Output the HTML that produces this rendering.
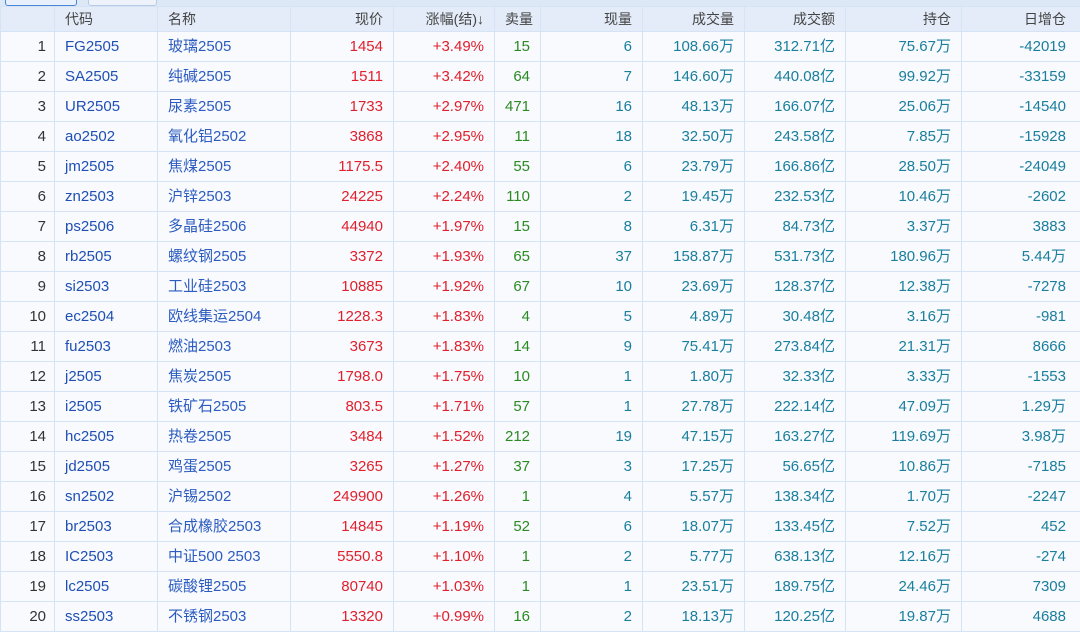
<!DOCTYPE html>
<html><head><meta charset="utf-8"><style>
body{margin:0;width:1080px;height:631px;overflow:hidden;background:#eef3fb;font-family:"Liberation Sans","Noto Sans CJK SC",sans-serif;}
.top{position:absolute;left:0;top:0;width:1080px;height:6px;background:#dde8f6;}
.b1{position:absolute;left:5px;top:-4px;width:70px;height:8px;border:1px solid #4a86d8;border-radius:3px;background:#e8f0fb;}
.b2{position:absolute;left:88px;top:-4px;width:67px;height:8px;border:1px solid #b8cbe6;border-radius:3px;background:#eef3fb;}
table{position:absolute;left:0;top:6px;border-collapse:collapse;table-layout:fixed;width:1080px;font-size:15px;}
td,th{border:1px solid #d6e3f4;padding:0 10px 0 10px;white-space:nowrap;overflow:hidden;vertical-align:middle;}
th{height:24px;line-height:24px;font-weight:normal;color:#444;background:#e3ecf8;font-size:14px;}
td{height:29px;line-height:29px;background:#f8fafe;}
td span,th span{display:inline-block;vertical-align:top;height:29px;}
.r{text-align:right;}.l{text-align:left;}
td.i{color:#333;text-align:right;padding-right:8px;}
td:last-child,th:last-child{padding-right:14px;}
.c{color:#1f4fb4;}.n{color:#2d5cc0;}.p{color:#e0202c;}.g{color:#2b8a22;}.t{color:#1a7e9c;}
</style></head><body>
<div class="top"></div><div class="b1"></div><div class="b2"></div>
<table>
<colgroup><col style="width:54px"><col style="width:103px"><col style="width:133px"><col style="width:103px"><col style="width:101px"><col style="width:46px"><col style="width:102px"><col style="width:102px"><col style="width:101px"><col style="width:116px"><col style="width:119px"></colgroup>
<tr><th></th><th class="l">代码</th><th class="l">名称</th><th class="r">现价</th><th class="r">涨幅(结)↓</th><th class="r">卖量</th><th class="r">现量</th><th class="r">成交量</th><th class="r">成交额</th><th class="r">持仓</th><th class="r">日增仓</th></tr>
<tr><td class="i">1</td><td class="c">FG2505</td><td class="n">玻璃2505</td><td class="r p">1454</td><td class="r p">+3.49%</td><td class="r g">15</td><td class="r t">6</td><td class="r t">108.66万</td><td class="r t">312.71亿</td><td class="r t">75.67万</td><td class="r t">-42019</td></tr>
<tr><td class="i">2</td><td class="c">SA2505</td><td class="n">纯碱2505</td><td class="r p">1511</td><td class="r p">+3.42%</td><td class="r g">64</td><td class="r t">7</td><td class="r t">146.60万</td><td class="r t">440.08亿</td><td class="r t">99.92万</td><td class="r t">-33159</td></tr>
<tr><td class="i">3</td><td class="c">UR2505</td><td class="n">尿素2505</td><td class="r p">1733</td><td class="r p">+2.97%</td><td class="r g">471</td><td class="r t">16</td><td class="r t">48.13万</td><td class="r t">166.07亿</td><td class="r t">25.06万</td><td class="r t">-14540</td></tr>
<tr><td class="i">4</td><td class="c">ao2502</td><td class="n">氧化铝2502</td><td class="r p">3868</td><td class="r p">+2.95%</td><td class="r g">11</td><td class="r t">18</td><td class="r t">32.50万</td><td class="r t">243.58亿</td><td class="r t">7.85万</td><td class="r t">-15928</td></tr>
<tr><td class="i">5</td><td class="c">jm2505</td><td class="n">焦煤2505</td><td class="r p">1175.5</td><td class="r p">+2.40%</td><td class="r g">55</td><td class="r t">6</td><td class="r t">23.79万</td><td class="r t">166.86亿</td><td class="r t">28.50万</td><td class="r t">-24049</td></tr>
<tr><td class="i">6</td><td class="c">zn2503</td><td class="n">沪锌2503</td><td class="r p">24225</td><td class="r p">+2.24%</td><td class="r g">110</td><td class="r t">2</td><td class="r t">19.45万</td><td class="r t">232.53亿</td><td class="r t">10.46万</td><td class="r t">-2602</td></tr>
<tr><td class="i">7</td><td class="c">ps2506</td><td class="n">多晶硅2506</td><td class="r p">44940</td><td class="r p">+1.97%</td><td class="r g">15</td><td class="r t">8</td><td class="r t">6.31万</td><td class="r t">84.73亿</td><td class="r t">3.37万</td><td class="r t">3883</td></tr>
<tr><td class="i">8</td><td class="c">rb2505</td><td class="n">螺纹钢2505</td><td class="r p">3372</td><td class="r p">+1.93%</td><td class="r g">65</td><td class="r t">37</td><td class="r t">158.87万</td><td class="r t">531.73亿</td><td class="r t">180.96万</td><td class="r t">5.44万</td></tr>
<tr><td class="i">9</td><td class="c">si2503</td><td class="n">工业硅2503</td><td class="r p">10885</td><td class="r p">+1.92%</td><td class="r g">67</td><td class="r t">10</td><td class="r t">23.69万</td><td class="r t">128.37亿</td><td class="r t">12.38万</td><td class="r t">-7278</td></tr>
<tr><td class="i">10</td><td class="c">ec2504</td><td class="n">欧线集运2504</td><td class="r p">1228.3</td><td class="r p">+1.83%</td><td class="r g">4</td><td class="r t">5</td><td class="r t">4.89万</td><td class="r t">30.48亿</td><td class="r t">3.16万</td><td class="r t">-981</td></tr>
<tr><td class="i">11</td><td class="c">fu2503</td><td class="n">燃油2503</td><td class="r p">3673</td><td class="r p">+1.83%</td><td class="r g">14</td><td class="r t">9</td><td class="r t">75.41万</td><td class="r t">273.84亿</td><td class="r t">21.31万</td><td class="r t">8666</td></tr>
<tr><td class="i">12</td><td class="c">j2505</td><td class="n">焦炭2505</td><td class="r p">1798.0</td><td class="r p">+1.75%</td><td class="r g">10</td><td class="r t">1</td><td class="r t">1.80万</td><td class="r t">32.33亿</td><td class="r t">3.33万</td><td class="r t">-1553</td></tr>
<tr><td class="i">13</td><td class="c">i2505</td><td class="n">铁矿石2505</td><td class="r p">803.5</td><td class="r p">+1.71%</td><td class="r g">57</td><td class="r t">1</td><td class="r t">27.78万</td><td class="r t">222.14亿</td><td class="r t">47.09万</td><td class="r t">1.29万</td></tr>
<tr><td class="i">14</td><td class="c">hc2505</td><td class="n">热卷2505</td><td class="r p">3484</td><td class="r p">+1.52%</td><td class="r g">212</td><td class="r t">19</td><td class="r t">47.15万</td><td class="r t">163.27亿</td><td class="r t">119.69万</td><td class="r t">3.98万</td></tr>
<tr><td class="i">15</td><td class="c">jd2505</td><td class="n">鸡蛋2505</td><td class="r p">3265</td><td class="r p">+1.27%</td><td class="r g">37</td><td class="r t">3</td><td class="r t">17.25万</td><td class="r t">56.65亿</td><td class="r t">10.86万</td><td class="r t">-7185</td></tr>
<tr><td class="i">16</td><td class="c">sn2502</td><td class="n">沪锡2502</td><td class="r p">249900</td><td class="r p">+1.26%</td><td class="r g">1</td><td class="r t">4</td><td class="r t">5.57万</td><td class="r t">138.34亿</td><td class="r t">1.70万</td><td class="r t">-2247</td></tr>
<tr><td class="i">17</td><td class="c">br2503</td><td class="n">合成橡胶2503</td><td class="r p">14845</td><td class="r p">+1.19%</td><td class="r g">52</td><td class="r t">6</td><td class="r t">18.07万</td><td class="r t">133.45亿</td><td class="r t">7.52万</td><td class="r t">452</td></tr>
<tr><td class="i">18</td><td class="c">IC2503</td><td class="n">中证500 2503</td><td class="r p">5550.8</td><td class="r p">+1.10%</td><td class="r g">1</td><td class="r t">2</td><td class="r t">5.77万</td><td class="r t">638.13亿</td><td class="r t">12.16万</td><td class="r t">-274</td></tr>
<tr><td class="i">19</td><td class="c">lc2505</td><td class="n">碳酸锂2505</td><td class="r p">80740</td><td class="r p">+1.03%</td><td class="r g">1</td><td class="r t">1</td><td class="r t">23.51万</td><td class="r t">189.75亿</td><td class="r t">24.46万</td><td class="r t">7309</td></tr>
<tr><td class="i">20</td><td class="c">ss2503</td><td class="n">不锈钢2503</td><td class="r p">13320</td><td class="r p">+0.99%</td><td class="r g">16</td><td class="r t">2</td><td class="r t">18.13万</td><td class="r t">120.25亿</td><td class="r t">19.87万</td><td class="r t">4688</td></tr>
</table>
</body></html>
